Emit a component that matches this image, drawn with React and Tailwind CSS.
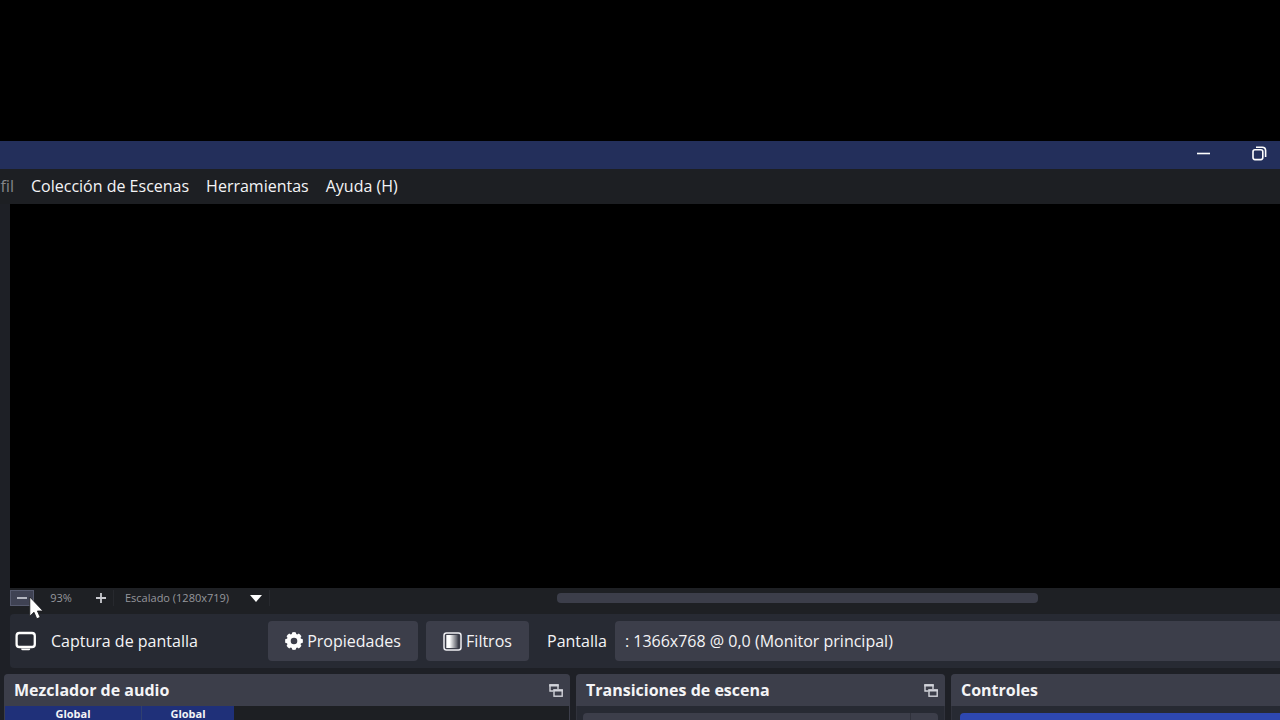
import React from 'react';

function GearIcon() {
  const teeth = [0, 45, 90, 135, 180, 225, 270, 315];
  return (
    <svg className="size-[18px] shrink-0" viewBox="0 0 18 18" fill="#fefefe" aria-hidden="true">
      {teeth.map((angle) => (
        <path key={angle} d="M6.4 4 7.1 0.4Q9 -0.2 10.9 0.4L11.6 4Z" transform={`rotate(${angle} 9 9)`} />
      ))}
      <circle cx="9" cy="9" r="5.3" fill="none" stroke="#fefefe" strokeWidth="4" />
    </svg>
  );
}

function FilterIcon() {
  return (
    <svg className="size-[19px] shrink-0" viewBox="0 0 19 19" aria-hidden="true">
      <defs>
        <linearGradient id="fade">
          <stop offset="0.3" stopColor="#fefefe" />
          <stop offset="1" stopColor="#fefefe" stopOpacity="0.1" />
        </linearGradient>
      </defs>
      <rect x="1" y="1" width="17" height="17" rx="2.5" fill="#3c3e4a" stroke="#eeeef2" strokeWidth="1.5" />
      <rect x="3.3" y="3" width="11.5" height="13" fill="url(#fade)" />
    </svg>
  );
}

function MonitorIcon() {
  return (
    <svg className="h-5 w-[22px] shrink-0" viewBox="0 0 22 20" aria-hidden="true">
      <rect x="1.6" y="2" width="18.2" height="14" rx="2.8" fill="none" stroke="#fefefe" strokeWidth="2.3" />
      <path d="M6.2 17.6h9v.3q0 1.4-1.4 1.4H7.6q-1.4 0-1.4-1.4Z" fill="#fefefe" />
    </svg>
  );
}

function FloatIcon() {
  return (
    <svg className="h-[13px] w-[14px]" viewBox="0 0 14 13" fill="none" stroke="#d2d3da" aria-hidden="true">
      <path d="M4 7H1V1H9V5" strokeWidth="1.4" />
      <path d="M0.3 1.4H9.7" strokeWidth="2.4" />
      <rect x="5" y="6.2" width="8.2" height="6" strokeWidth="1.4" />
      <path d="M4.3 6.4H13.9" strokeWidth="2.4" />
    </svg>
  );
}

function Cursor() {
  return (
    <svg className="pointer-events-none absolute top-2 left-[18px] z-10 h-[26px] w-4" viewBox="0 0 16 26" aria-hidden="true">
      <path d="M1.8 1V20.2L6 16.2 8.8 22.8 12.2 21.3 9.4 15H15Z" fill="#fefefe" stroke="#17181c" strokeWidth="0.8" />
    </svg>
  );
}

function Dock({ title, floating, className, children }) {
  return (
    <section className={`flex min-w-0 flex-col overflow-hidden bg-[#272a33] ${className}`}>
      <header className="flex h-8 shrink-0 items-center justify-between bg-[#3c3e4a] pr-[7px] pl-2.5">
        <h2 className="text-base font-bold">{title}</h2>
        {floating && (
          <button type="button" aria-label={`Desacoplar ${title}`}>
            <FloatIcon />
          </button>
        )}
      </header>
      {children}
    </section>
  );
}

export default function App() {
  return (
    <div className="flex h-screen flex-col overflow-hidden bg-[#1e2026] font-['Open_Sans','Noto_Sans',sans-serif] text-[#f4f4f6]">
      <div className="h-[141px] shrink-0 bg-black" />
      <div className="flex h-7 shrink-0 items-center justify-end gap-10 bg-[#232f5b] pr-[13px] pb-1">
        <button type="button" aria-label="Minimizar">
          <svg className="h-3.5 w-4" viewBox="0 0 16 14" aria-hidden="true">
            <path d="M1 7.5H14" stroke="#fefefe" strokeWidth="1.6" />
          </svg>
        </button>
        <button type="button" aria-label="Restaurar">
          <svg className="h-[15px] w-[15px]" viewBox="0 0 15 15" fill="none" stroke="#fefefe" strokeWidth="1.6" aria-hidden="true">
            <rect x="1" y="3.8" width="9.8" height="9.8" rx="2" />
            <path d="M4 1.2H10.2Q13.6 1.2 13.6 4.6V11" />
          </svg>
        </button>
      </div>

      <nav className="flex h-[35px] shrink-0 items-center gap-[17px] overflow-hidden bg-[#1d1f23] pb-0.5 text-base">
        <button type="button" className="flex w-3.5 justify-end text-[#85868b]">fil</button>
        <button type="button">Colección de Escenas</button>
        <button type="button">Herramientas</button>
        <button type="button">Ayuda (H)</button>
      </nav>

      <main className="ml-2.5 min-h-0 flex-1 bg-black" aria-label="Vista previa" />

      <div className="relative ml-2.5 flex h-[26px] shrink-0 items-start bg-[#1e2024] text-[11px] text-[#96979c]">
        <div className="flex h-5 items-center">
          <button type="button" aria-label="Reducir" className="flex h-4 w-6 items-center justify-center border border-[#565a6e] bg-[#3f4253]">
            <svg className="h-2.5 w-2.5" viewBox="0 0 10 10" aria-hidden="true">
              <path d="M0 5H10" stroke="#b4b6c0" strokeWidth="2" />
            </svg>
          </button>
          <span className="w-[54px] text-center">93%</span>
          <button type="button" aria-label="Ampliar" className="flex h-4 w-[26px] items-center justify-center border-r border-[#27292e]">
            <svg className="h-2.5 w-2.5" viewBox="0 0 10 10" aria-hidden="true">
              <path d="M0 5H10M5 0V10" stroke="#c9cad0" strokeWidth="1.8" />
            </svg>
          </button>
          <div className="relative flex h-4 w-[156px] items-center border-r border-[#27292e]">
            <select aria-label="Escala de la vista previa" className="w-full appearance-none bg-transparent pl-[11px]">
              <option>Escalado (1280x719)</option>
            </select>
            <svg className="pointer-events-none absolute right-[7px] h-[7px] w-3" viewBox="0 0 12 7" aria-hidden="true">
              <path d="M0 0H12L6 7Z" fill="#fefefe" />
            </svg>
          </div>
        </div>
        <div className="grid h-5 min-w-0 flex-1 grid-cols-[287fr_481fr_242fr] items-center">
          <div className="col-start-2 h-2.5 rounded bg-[#3c3e4a]" />
        </div>
        <Cursor />
      </div>

      <div className="ml-2.5 flex h-[54px] shrink-0 items-center gap-2 rounded-l bg-[#272a33] text-base">
        <div className="flex w-[250px] shrink-0 items-center gap-3.5 pl-[5px]">
          <MonitorIcon />
          <span>Captura de pantalla</span>
        </div>
        <button type="button" className="flex h-10 w-[150px] shrink-0 items-center justify-center gap-1 rounded bg-[#3c3e4a]">
          <GearIcon />
          Propiedades
        </button>
        <button type="button" className="flex h-10 w-[103px] shrink-0 items-center justify-center gap-1 rounded bg-[#3c3e4a]">
          <FilterIcon />
          Filtros
        </button>
        <label htmlFor="display" className="shrink-0 pl-2.5">Pantalla</label>
        <select id="display" className="h-10 min-w-0 flex-1 appearance-none rounded-l bg-[#3c3e4a] px-2.5">
          <option>: 1366x768 @ 0,0 (Monitor principal)</option>
        </select>
      </div>

      <div className="mt-1.5 grid h-[46px] shrink-0 grid-cols-[566fr_369fr_329fr] gap-1.5 pl-1">
        <Dock title="Mezclador de audio" floating className="rounded-t">
          <div className="flex flex-1 border-x border-[#3c3e4a] bg-[#1d1f23] text-[11px] font-bold">
            <div className="flex w-[137px] justify-center border-r border-[#30406f] bg-[#1f3079] leading-4">Global</div>
            <div className="flex w-[92px] justify-center bg-[#1f3079] leading-4">Global</div>
          </div>
        </Dock>
        <Dock title="Transiciones de escena" floating className="rounded-t">
          <div className="flex flex-1 border-x border-[#30323c] px-1.5 pt-[7px]">
            <button type="button" aria-label="Transición" className="flex flex-1 justify-end rounded-t bg-[#3c3e4a]">
              <span className="w-7 border-l border-[#30323c]" />
            </button>
          </div>
        </Dock>
        <Dock title="Controles" className="rounded-tl">
          <div className="flex flex-1 border-l border-[#30323c] pt-[7px] pl-2">
            <button type="button" aria-label="Iniciar transmisión" className="flex-1 rounded-tl bg-[#2e48b0]" />
          </div>
        </Dock>
      </div>
    </div>
  );
}
